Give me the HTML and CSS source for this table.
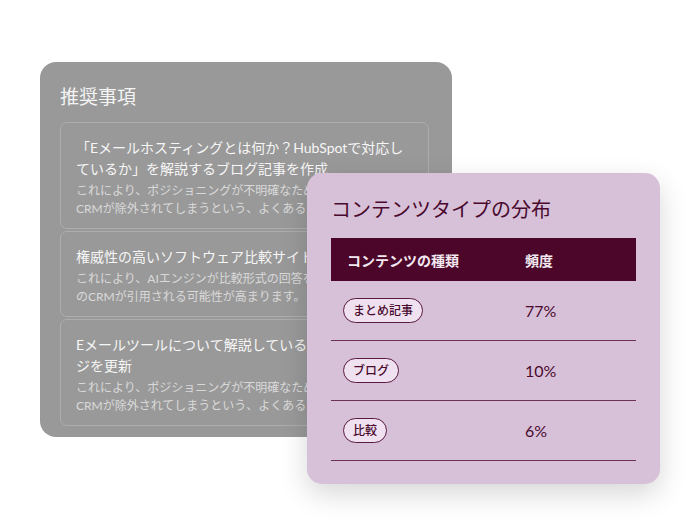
FILE: index.html
```html
<!DOCTYPE html>
<html lang="ja">
<head>
<meta charset="utf-8">
<title>推奨事項</title>
<link rel="stylesheet" href="styles.css">
</head>
<body>
<div class="stage">
  <section class="rec-card">
    <h2 class="rec-title">推奨事項</h2>
    <div class="rec-list">
      <div class="rec-item">
        <div class="item-title">「Eメールホスティングとは何か？HubSpotで対応しているか」を解説するブログ記事を作成</div>
        <div class="item-desc">これにより、ポジショニングが不明確なため、比較検討の場で<br>CRMが除外されてしまうという、よくある問題を防げます。</div>
      </div>
      <div class="rec-item">
        <div class="item-title">権威性の高いソフトウェア比較サイトへ掲載</div>
        <div class="item-desc">これにより、AIエンジンが比較形式の回答を生成する際に自社<br>のCRMが引用される可能性が高まります。</div>
      </div>
      <div class="rec-item">
        <div class="item-title">Eメールツールについて解説している自社の製品ページを更新</div>
        <div class="item-desc">これにより、ポジショニングが不明確なため、比較検討の場で<br>CRMが除外されてしまうという、よくある問題を防げます。</div>
      </div>
    </div>
  </section>

  <section class="dist-card">
    <h2 class="dist-title">コンテンツタイプの分布</h2>
    <div class="dist-table">
      <div class="dist-head">
        <div class="col-type">コンテンツの種類</div>
        <div class="col-freq">頻度</div>
      </div>
      <div class="dist-row">
        <div class="col-type"><span class="pill">まとめ記事</span></div>
        <div class="col-freq">77%</div>
      </div>
      <div class="dist-row">
        <div class="col-type"><span class="pill">ブログ</span></div>
        <div class="col-freq">10%</div>
      </div>
      <div class="dist-row">
        <div class="col-type"><span class="pill">比較</span></div>
        <div class="col-freq">6%</div>
      </div>
    </div>
  </section>
</div>
</body>
</html>
```

FILE: styles.css
```css
* { box-sizing: border-box; }

html, body {
  margin: 0;
  padding: 0;
  background: #ffffff;
}

body {
  font-family: "Lato", "Noto Sans CJK JP", sans-serif;
}

.stage {
  position: relative;
  width: 700px;
  height: 525px;
  padding: 62px 0 0 40px;
  overflow: hidden;
}

/* Left card */
.rec-card {
  width: 412px;
  height: 375px;
  background: #999999;
  border-radius: 16px;
  padding: 22px 23px 0 20px;
}

.rec-title {
  margin: 0 0 12px;
  font-size: 19px;
  line-height: 26px;
  font-weight: 400;
  color: #f4f4f4;
}

.rec-list {
  display: flex;
  flex-direction: column;
  gap: 2px;
}

.rec-item {
  border: 1px solid #adadad;
  border-radius: 7px;
  padding: 14px 15px 10px 15px;
}

.item-title {
  font-size: 14px;
  line-height: 21px;
  font-weight: 400;
  color: #f6f6f6;
}

.item-desc {
  margin-top: 3px;
  font-size: 12px;
  line-height: 18px;
  color: #d9d9d9;
}

/* Right card (overlapping) */
.dist-card {
  position: absolute;
  left: 307px;
  top: 173px;
  width: 353px;
  height: 311px;
  background: #d7c1d9;
  border-radius: 15px;
  padding: 22px 24px 0 24px;
  box-shadow: 0 10px 28px rgba(0, 0, 0, 0.16);
}

.dist-title {
  margin: 0 0 14px;
  font-size: 20px;
  line-height: 29px;
  font-weight: 400;
  color: #4a0a2e;
}

.dist-table {
  width: 305px;
}

.dist-head,
.dist-row {
  display: grid;
  grid-template-columns: 194px 1fr;
  align-items: center;
}

.dist-head {
  height: 43px;
  background: #4b0629;
  color: #f3e8f0;
  font-size: 14px;
  font-weight: 700;
}

.dist-head .col-type {
  padding-left: 16px;
}

.dist-row {
  height: 60px;
  border-bottom: 1.5px solid #6e3058;
  color: #4a0a2e;
}

.dist-row .col-type {
  padding-left: 12px;
}

.dist-row .col-freq {
  font-size: 16px;
}

.pill {
  display: inline-block;
  height: 25px;
  line-height: 23px;
  padding: 0 9px;
  border: 1px solid #5a1a40;
  border-radius: 13px;
  background: #efe1ef;
  font-size: 12px;
  font-weight: 500;
  color: #4a0a2e;
}
```
